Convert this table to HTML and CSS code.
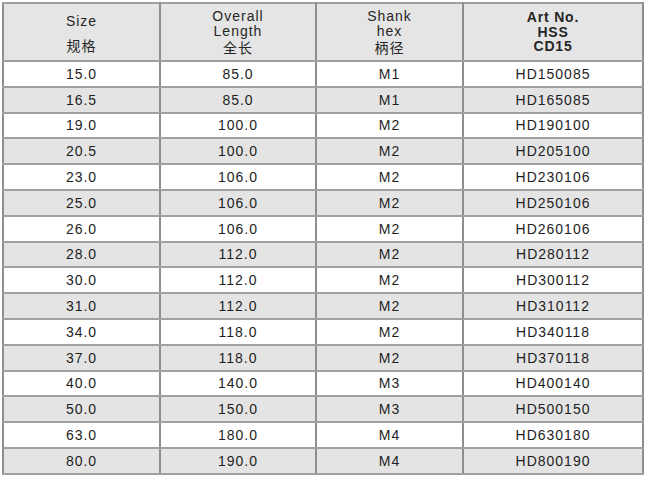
FILE: index.html
```html
<!DOCTYPE html>
<html>
<head>
<meta charset="utf-8">
<link rel="stylesheet" href="styles.css">
</head>
<body>
<table class="spec">
  <colgroup>
    <col class="c1"><col class="c2"><col class="c3"><col class="c4">
  </colgroup>
  <thead>
    <tr class="head">
      <th><div class="two"><span>Size</span><span class="cjk">规格</span></div></th>
      <th><div class="three"><span>Overall</span><span>Length</span><span class="cjk">全长</span></div></th>
      <th><div class="three"><span>Shank</span><span>hex</span><span class="cjk">柄径</span></div></th>
      <th><div class="three bold"><span>Art No.</span><span>HSS</span><span>CD15</span></div></th>
    </tr>
  </thead>
  <tbody>
    <tr><td>15.0</td><td>85.0</td><td>M1</td><td>HD150085</td></tr>
    <tr><td>16.5</td><td>85.0</td><td>M1</td><td>HD165085</td></tr>
    <tr><td>19.0</td><td>100.0</td><td>M2</td><td>HD190100</td></tr>
    <tr><td>20.5</td><td>100.0</td><td>M2</td><td>HD205100</td></tr>
    <tr><td>23.0</td><td>106.0</td><td>M2</td><td>HD230106</td></tr>
    <tr><td>25.0</td><td>106.0</td><td>M2</td><td>HD250106</td></tr>
    <tr><td>26.0</td><td>106.0</td><td>M2</td><td>HD260106</td></tr>
    <tr><td>28.0</td><td>112.0</td><td>M2</td><td>HD280112</td></tr>
    <tr><td>30.0</td><td>112.0</td><td>M2</td><td>HD300112</td></tr>
    <tr><td>31.0</td><td>112.0</td><td>M2</td><td>HD310112</td></tr>
    <tr><td>34.0</td><td>118.0</td><td>M2</td><td>HD340118</td></tr>
    <tr><td>37.0</td><td>118.0</td><td>M2</td><td>HD370118</td></tr>
    <tr><td>40.0</td><td>140.0</td><td>M3</td><td>HD400140</td></tr>
    <tr><td>50.0</td><td>150.0</td><td>M3</td><td>HD500150</td></tr>
    <tr><td>63.0</td><td>180.0</td><td>M4</td><td>HD630180</td></tr>
    <tr><td>80.0</td><td>190.0</td><td>M4</td><td>HD800190</td></tr>
  </tbody>
</table>
</body>
</html>
```

FILE: styles.css
```css
html, body {
  margin: 0;
  padding: 0;
  background: #ffffff;
}

body {
  padding: 2px 0 0 2px;
  font-family: "Liberation Sans", Arial, "Noto Sans CJK SC", sans-serif;
  color: #1e1e1e;
}

.spec {
  border-collapse: collapse;
  table-layout: fixed;
  width: 640px;
  border: 2px solid #a9a9a9;
}

.c1 { width: 157px; }
.c2 { width: 156px; }
.c3 { width: 147px; }
.c4 { width: 180px; }

.spec th,
.spec td {
  padding: 0;
  text-align: center;
  vertical-align: middle;
  font-size: 14px;
  letter-spacing: 1px;
  font-weight: normal;
  border-left: 2px solid #8e8e8e;
  border-right: 2px solid #8e8e8e;
  border-top: 2px solid #a0a0a0;
  border-bottom: 2px solid #a0a0a0;
}

.head {
  height: 58px;
  background: #e5e5e5;
}

.head th {
  color: #262626;
}

.two,
.three {
  display: flex;
  flex-direction: column;
  align-items: center;
}

.two {
  line-height: 24px;
  padding-top: 1px;
}

.three {
  line-height: 14.5px;
  padding-top: 0;
}

.three .cjk {
  margin-top: 2px;
}

.bold {
  font-weight: bold;
  letter-spacing: 0.8px;
}

.cjk {
  font-family: "Noto Sans CJK SC", sans-serif;
  font-size: 14px;
  letter-spacing: 1px;
}

tbody tr {
  height: 25.8px;
}

tbody tr:nth-child(odd) {
  background: #ffffff;
}

tbody tr:nth-child(even) {
  background: #e4e4e4;
}

tbody td {
  line-height: 16px;
}
```
